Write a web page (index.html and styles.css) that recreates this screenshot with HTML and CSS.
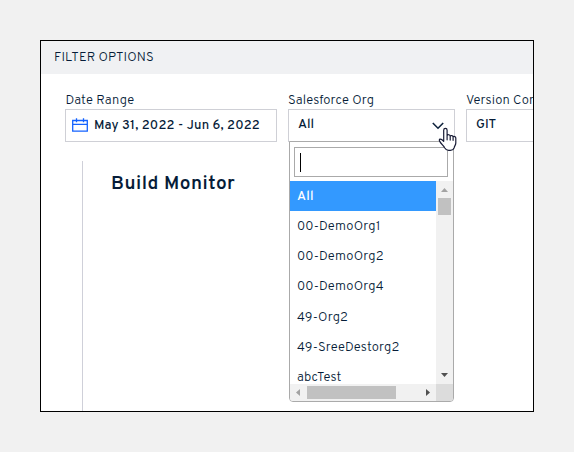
FILE: index.html
```html
<!DOCTYPE html>
<html lang="en">
<head>
<meta charset="utf-8">
<title>Build Monitor</title>
<link rel="stylesheet" href="styles.css">
</head>
<body>
<main class="frame">
  <header class="panel-title"><span class="t-filter">FILTER OPTIONS</span></header>
  <section class="filters">
    <div class="filter date">
      <label class="t-date">Date Range</label>
      <div class="field">
        <svg class="calendar" width="16" height="14" viewBox="0 0 16 14" fill="none" stroke="#1463ff" stroke-width="1.3"><path d="M.7 2.500h14.600v10.600H.7zM.7 6.400h14.600M4.500.3v4M11.500.3v4"/></svg>
        <span class="value t-range">May 31, 2022 - Jun 6, 2022</span>
      </div>
    </div>
    <div class="filter org">
      <label class="t-org">Salesforce Org</label>
      <div class="field select"><span class="value t-all">All</span>
        <svg class="chevron" width="12" height="8" viewBox="0 0 12 8" fill="none" stroke="#10243e" stroke-width="1.6"><path d="M.8 1 6 6.2 11.2 1"/></svg>
      </div>
      <div class="dropdown">
        <div class="search"><i class="caret"></i></div>
        <div class="results">
          <ul class="options">
            <li class="active t-all">All</li>
            <li>00-DemoOrg1</li>
            <li>00-DemoOrg2</li>
            <li>00-DemoOrg4</li>
            <li>49-Org2</li>
            <li>49-SreeDestorg2</li>
            <li>abcTest</li>
          </ul>
          <div class="vbar">
            <svg width="17" height="17"><path d="M5 11h7L8.500 7z" fill="#a3a3a3"/></svg>
            <i class="vthumb"></i>
            <svg class="down" width="17" height="17"><path d="M5 6h7l-3.500 4z" fill="#505050"/></svg>
          </div>
          <div class="hbar">
            <svg width="17" height="17"><path d="M10 5v7L6 8.500z" fill="#a3a3a3"/></svg>
            <i class="hthumb"></i>
            <svg class="right" width="17" height="17"><path d="M7 5v7l4-3.500z" fill="#505050"/></svg>
          </div>
          <div class="corner"></div>
        </div>
      </div>
      <svg class="pointer" width="20" height="25" viewBox="0 0 20 25"><path d="M5.700 14.300V3.200c0-2.400 3.400-2.400 3.400 0v5.300c.4-1.200 2.900-1 3.100.6.600-1 2.600-.7 2.900.7.800-.8 2.700-.2 2.700 1.200v4.900c0 2-1.300 3-1.600 4.800-.5 1.700-1.900 2.600-3.800 2.600h-1.800c-1.900 0-3-.9-4-2.600-.7-1.700-3.300-3.500-5-6.600-1-1.900.8-3.300 4.100.2zM9.100 8.500v4.300M12.200 9.200v3.900M15.100 9.900v3.400" fill="#fff" stroke="#171b35" stroke-width="1.2" stroke-linejoin="round" stroke-linecap="round"/></svg>
    </div>
    <div class="filter version">
      <label class="t-version">Version Control</label>
      <div class="field select"><span class="value t-git">GIT</span></div>
    </div>
  </section>
  <section class="monitor"><h1>Build Monitor</h1></section>
</main>
</body>
</html>
```
FILE: styles.css
```css
* { box-sizing: border-box; }
body {
  margin: 0;
  padding: 40px;
  height: 452px;
  overflow: hidden;
  background: #f1f1f1;
  color: #061c38;
  font: 300 13px/16px Overpass, Roboto, sans-serif;
}
.frame {
  width: 494px;
  height: 372px;
  border: 1px solid #000;
  background: #fff;
  overflow: hidden;
  display: flex;
  flex-direction: column;
}
.panel-title {
  flex: 0 0 33px;
  padding: 9px 13px 0;
  background: #f0f1f3;
}
.filters {
  display: flex;
  gap: 11px;
  padding: 19px 0 0 24px;
  height: 87px;
}
.filter { position: relative; flex: none; }
.date { width: 212px; }
.org { width: 167px; z-index: 2; }
.version { width: 167px; }
label { display: block; height: 16px; white-space: nowrap; padding-left: .5px; }
.org label, .version label { padding-left: 0; }
.field {
  display: flex;
  align-items: center;
  height: 33px;
  border: 1px solid #cfd0d6;
  background: #fff;
  padding: 0 6px;
}
.value { font-weight: 500; white-space: nowrap; }
.calendar { margin: -2px 6px 0 0; }
.select { padding: 0 10px 2px 9px; justify-content: space-between; }
.chevron { margin-top: 3px; }
.dropdown {
  position: absolute;
  top: 48px;
  left: 1px;
  width: 165px;
  height: 261px;
  border: 1px solid #aaa;
  border-radius: 0 0 4px 4px;
  background: #fff;
  overflow: hidden;
}
.search {
  height: 30px;
  margin: 5px 5px 4px 4px;
  border: 1px solid #aaa;
  padding: 5px;
}
.caret { display: block; width: 1px; height: 19px; background: #000; }
.results {
  display: grid;
  grid-template: 203px 17px / 146px 17px;
}
.options {
  list-style: none;
  margin: 0;
  padding: 0;
  overflow: hidden;
}
.options li {
  height: 30.13px;
  padding: 8px 7px 0;
  white-space: nowrap;
  letter-spacing: .18px;
}
.options .active { background: #3399ff; color: #fff; font-weight: 500; }
.vbar, .hbar { display: flex; background: #f1f1f1; }
.vbar { flex-direction: column; }
.vthumb { width: 13px; height: 17px; margin-left: 2px; background: #c1c1c1; }
.hthumb { width: 89px; height: 13px; margin-top: 2px; background: #c1c1c1; }
.down { margin-top: auto; }
.right { margin-left: auto; }
.corner { background: #dcdcdc; }
.pointer { position: absolute; left: 150px; top: 34px; }
.monitor {
  flex: 1;
  margin-left: 41px;
  border-left: 1px solid #cfd0d9;
  padding: 12px 28px;
}
h1 {
  margin: 0;
  font-size: 19px;
  line-height: 22px;
  font-weight: 600;
  letter-spacing: .5px;
}
.t-filter { letter-spacing: .15px; }
.t-date { letter-spacing: .2px; }
.t-range { letter-spacing: .17px; }
.t-org { letter-spacing: .15px; }
.t-version { letter-spacing: .15px; }
```
